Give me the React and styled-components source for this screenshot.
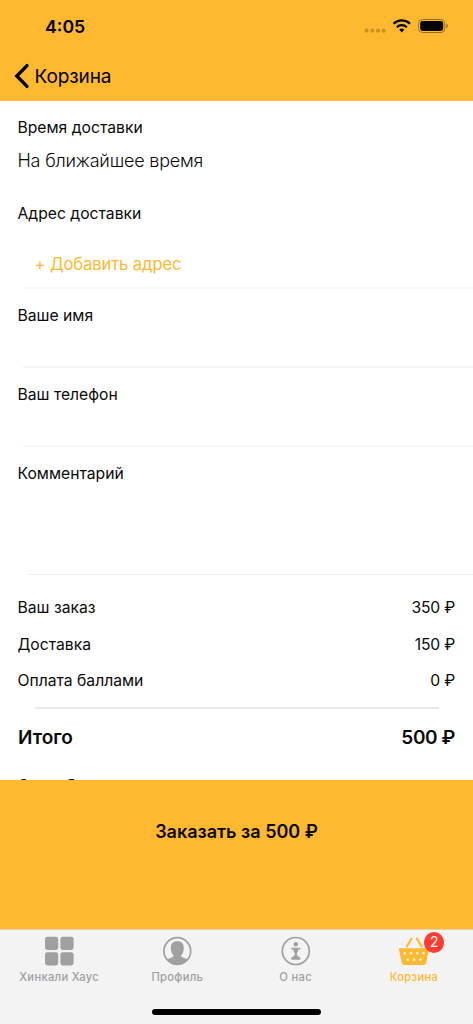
import React from 'react'
import styled, { createGlobalStyle } from 'styled-components'

const tabs = [
    { name: 'Хинкали Хаус', icon: <GridIcon /> },
    { name: 'Профиль', icon: <ProfileIcon /> },
    { name: 'О нас', icon: <InfoIcon /> },
    { name: 'Корзина', icon: <BasketIcon />, active: true, count: 2 },
]

const App = () => {
    return(
        <Screen>
            <GlobalStyle />
            <Header>
                <StatusBar>
                    <Clock>4:05</Clock>
                    <StatusIcons />
                </StatusBar>
                <NavBar>
                    <BackIcon />
                    <NavTitle>Корзина</NavTitle>
                </NavBar>
            </Header>
            <Content>
                <Field $height = {86}>
                    <Label>Время доставки</Label>
                    <Value>На ближайшее время</Value>
                </Field>
                <Field $height = {84}>
                    <Label>Адрес доставки</Label>
                    <AddAddress>+ Добавить адрес</AddAddress>
                </Field>
                <Divider />
                <Field $height = {61}>
                    <Label>Ваше имя</Label>
                </Field>
                <Divider />
                <Field $height = {61}>
                    <Label>Ваш телефон</Label>
                </Field>
                <Divider />
                <Field $height = {111}>
                    <Label>Комментарий</Label>
                </Field>
                <Divider $wide />
                <Summary>
                    <Row><span>Ваш заказ</span><Price>350 ₽</Price></Row>
                    <Row><span>Доставка</span><Price>150 ₽</Price></Row>
                    <Row><span>Оплата баллами</span><Price>0 ₽</Price></Row>
                </Summary>
                <TotalLine />
                <Total><span>Итого</span><TotalPrice>500 ₽</TotalPrice></Total>
                <Label>Способ оплаты</Label>
            </Content>
            <OrderButton>Заказать за 500 ₽</OrderButton>
            <TabBar>
                <Tabs>
                    {tabs.map((tab) => (
                        <Tab key = {tab.name} $active = {tab.active}>
                            <IconBox>
                                {tab.icon}
                                {tab.count && <Badge>{tab.count}</Badge>}
                            </IconBox>
                            <TabName>{tab.name}</TabName>
                        </Tab>
                    ))}
                </Tabs>
                <HomeIndicator />
            </TabBar>
        </Screen>
    )
}

function StatusIcons() {
    return(
        <svg width = "84" height = "18" viewBox = "364 17 84 18">
            <g fill = "#c99022">
                <rect x = "364.7" y = "28.7" width = "3.8" height = "3.8" rx = "1.2" />
                <rect x = "370.4" y = "28.7" width = "3.8" height = "3.8" rx = "1.2" />
                <rect x = "376.1" y = "28.7" width = "3.8" height = "3.8" rx = "1.2" />
                <rect x = "381.8" y = "28.7" width = "3.8" height = "3.8" rx = "1.2" />
            </g>
            <g fill = "none" stroke = "#000" strokeWidth = "2.3">
                <path d = "M393.6 23.8a11.6 11.6 0 0 1 16.4 0" />
                <path d = "M396.8 27.2a7.1 7.1 0 0 1 10 0" />
            </g>
            <path d = "M399.3 29.8a3.6 3.6 0 0 1 5 0l-2.5 2.8z" />
            <rect x = "418.6" y = "19.5" width = "26.2" height = "13" rx = "3.8" fill = "none" stroke = "#9a701f" strokeWidth = "1" />
            <rect x = "420.2" y = "21.1" width = "23" height = "9.8" rx = "2.3" />
            <path d = "M446.3 23.8c2.2.8 2.2 3.6 0 4.4z" fill = "#9a701f" />
        </svg>
    )
}

function BackIcon() {
    return(
        <svg width = "16" height = "26" viewBox = "0 0 16 26">
            <path d = "M13 2.6 2.8 13 13 23.4" fill = "none" stroke = "#000" strokeWidth = "3.4" strokeLinecap = "round" />
        </svg>
    )
}

function GridIcon() {
    return(
        <svg width = "30" height = "30" viewBox = "0 0 30 30" fill = "currentColor">
            <rect x = "1" y = "0.8" width = "13.2" height = "13.2" rx = "2.4" />
            <rect x = "16.4" y = "0.8" width = "13.2" height = "13.2" rx = "2.4" />
            <rect x = "1" y = "16.2" width = "13.2" height = "13.2" rx = "2.4" />
            <rect x = "16.4" y = "16.2" width = "13.2" height = "13.2" rx = "2.4" />
        </svg>
    )
}

function ProfileIcon() {
    return(
        <svg width = "30" height = "30" viewBox = "0 0 30 30" fill = "currentColor">
            <circle cx = "15.3" cy = "15" r = "13.4" fill = "none" stroke = "currentColor" strokeWidth = "1.7" />
            <path d = "M15.3 5.3c4.3 0 6.6 2.6 6.5 6.6 0 3.8-1.4 6.4-2.9 7.7 0 2.2 4.6 2.6 7 4.1a14 14 0 0 1-21.2 0c2.4-1.5 7-1.9 7-4.1-1.5-1.3-2.9-3.9-2.9-7.7-.1-4 2.2-6.6 6.5-6.6z" />
        </svg>
    )
}

function InfoIcon() {
    return(
        <svg width = "30" height = "30" viewBox = "0 0 30 30" fill = "currentColor">
            <circle cx = "14.8" cy = "15" r = "13.5" fill = "none" stroke = "currentColor" strokeWidth = "1.7" />
            <circle cx = "14.8" cy = "8.2" r = "2.2" />
            <path d = "M10.3 11.7h9v1.7h-2.2v2.2q-1.3.9-1.4 2.3.1 2.1 3.6 3.6v2.2h-9v-2.2q3.5-1.5 3.6-3.6-.1-1.4-1.4-2.3v-2.2h-2.2z" />
        </svg>
    )
}

function BasketIcon() {
    return(
        <svg width = "30" height = "30" viewBox = "0 0 30 30">
            <path d = "M7.8 10.4 12.6 2.6M22.6 10.4 17.8 2.6" stroke = "currentColor" strokeWidth = "2.1" strokeLinecap = "round" />
            <path d = "M1 12.2h28q1.3 0 1 1.4L27.2 27q-.4 2.1-2.5 2.1H5.3q-2.1 0-2.5-2.1L0 13.6q-.3-1.4 1-1.4z" fill = "currentColor" />
            <g fill = "#f3f3f3">
                <circle cx = "5.7" cy = "17.3" r = "1.2" />
                <circle cx = "12" cy = "17.3" r = "1.2" />
                <circle cx = "18.2" cy = "17.3" r = "1.2" />
                <circle cx = "24.5" cy = "17.3" r = "1.2" />
                <circle cx = "8.8" cy = "23.8" r = "1.2" />
                <circle cx = "15.1" cy = "23.8" r = "1.2" />
                <circle cx = "21.4" cy = "23.8" r = "1.2" />
            </g>
        </svg>
    )
}

const GlobalStyle = createGlobalStyle`
    body {
        margin: 0;
        background: #fff;
    }
    * {
        box-sizing: border-box;
    }
    svg {
        display: block;
        overflow: visible;
    }
`
const Screen = styled.div`
    display: flex;
    flex-direction: column;
    width: 473px;
    height: 1024px;
    overflow: hidden;
    color: #0a0a0a;
    font-family: Inter, "Liberation Sans", sans-serif;
`
const Header = styled.div`
    flex: none;
    height: 100.5px;
    background: #feb931;
    color: #000;
`
const StatusBar = styled.div`
    display: flex;
    justify-content: space-between;
    align-items: center;
    height: 52px;
    padding: 0 25px 0 45px;
`
const Clock = styled.div`
    font-size: 17.7px;
    font-weight: 600;
`
const NavBar = styled.div`
    display: flex;
    align-items: center;
    height: 48px;
    padding-left: 14px;
`
const NavTitle = styled.div`
    margin-left: 4.5px;
    font-size: 19px;
    letter-spacing: -0.1px;
`
const Content = styled.div`
    flex: none;
    height: 679.5px;
    padding-top: 16.5px;
    overflow: hidden;
`
const Field = styled.div`
    height: ${props => props.$height}px;
`
const Label = styled.div`
    padding-left: 17.5px;
    font-size: 15.7px;
    line-height: 22px;
`
const Value = styled.div`
    margin-top: 10px;
    padding-left: 17.5px;
    font-size: 18px;
    font-weight: 300;
    letter-spacing: -0.2px;
    line-height: 24px;
`
const AddAddress = styled.div`
    margin-top: 27px;
    padding-left: 34.5px;
    color: #feb931;
    font-size: 16.6px;
    letter-spacing: -0.1px;
    line-height: 24px;
`
const Divider = styled.div`
    height: 2px;
    margin: 0 0 ${props => props.$wide ? 14 : 16}px ${props => props.$wide ? 28 : 23}px;
    border-top: ${props => props.$wide ? '1px solid #efefef' : '2px solid #f7f7f7'};
`
const Summary = styled.div`
    padding: 0 18px 0 17.5px;
`
const Row = styled.div`
    display: flex;
    justify-content: space-between;
    font-size: 15.7px;
    line-height: 36.6px;
`
const Price = styled.span`
    letter-spacing: -0.2px;
`
const TotalLine = styled.div`
    height: 2px;
    margin: 7px 34px 0 35px;
    background: #e9e9e9;
`
const Total = styled.div`
    display: flex;
    justify-content: space-between;
    height: 66px;
    padding: 15px 18px 0;
    font-size: 19px;
    font-weight: 600;
    line-height: 28px;
`
const TotalPrice = styled.span`
    letter-spacing: -0.4px;
`
const OrderButton = styled.button`
    flex: none;
    height: 149px;
    padding: 0 0 46px;
    border: none;
    background: #feb931;
    color: #0a0a0a;
    font-family: inherit;
    font-size: 18px;
    font-weight: 600;
`
const TabBar = styled.div`
    flex: none;
    height: 95px;
    border-top: 1px solid #e3d3ae;
    background: #f3f3f3;
`
const Tabs = styled.div`
    display: flex;
    height: 78.5px;
`
const Tab = styled.div`
    display: flex;
    flex: 1;
    flex-direction: column;
    align-items: center;
    padding-top: 5.5px;
    color: ${props => props.$active ? '#feb931' : '#a0a0a0'};
`
const IconBox = styled.div`
    position: relative;
`
const Badge = styled.div`
    position: absolute;
    top: -3.5px;
    left: 25px;
    width: 20.5px;
    height: 20.5px;
    border-radius: 50%;
    background: #ff3b30;
    color: #fff;
    font-size: 14.5px;
    line-height: 20.5px;
    text-align: center;
`
const TabName = styled.div`
    margin-top: 3px;
    font-size: 11.2px;
    font-weight: 500;
    letter-spacing: 0.3px;
    line-height: 16px;
`
const HomeIndicator = styled.div`
    width: 169px;
    height: 6px;
    margin: 0 auto;
    border-radius: 3px;
    background: #000;
`

export default App
